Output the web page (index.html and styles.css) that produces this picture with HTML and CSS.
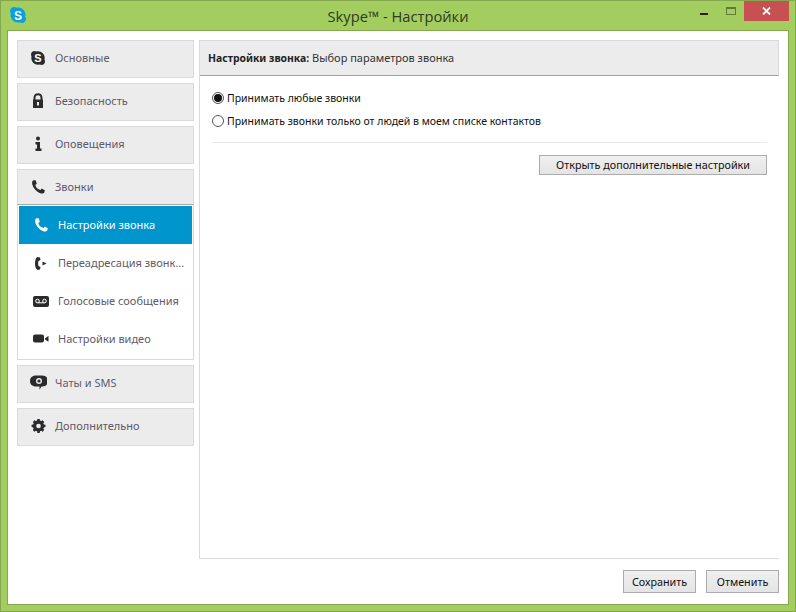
FILE: index.html
```html
<!DOCTYPE html>
<html lang="ru">
<head>
<meta charset="utf-8">
<title>Skype™ - Настройки</title>
<link rel="stylesheet" href="styles.css">
</head>
<body>
<div class="window">
  <header class="titlebar">
    <div class="tb-left">
      <svg class="app-icon" width="16" height="16" viewBox="0 0 16 16"><path fill="#0a9fe0" d="M4 0C2 0 0 2 0 4c0 1 .3 1.800.8 2.500C.6 7 .5 7.500.5 8c0 4 3.500 7.500 7.500 7.500.5 0 1-.1 1.500-.3.700.5 1.500.8 2.500.8 2 0 4-2 4-4 0-1-.3-1.800-.8-2.500.2-.5.300-1 .3-1.500C15.500 4 12 .5 8 .5c-.5 0-1 .1-1.500.3C5.800.3 5 0 4 0z"/><text x="8" y="12.500" class="app-s">S</text></svg>
    </div>
    <div class="tb-title">Skype™ - Настройки</div>
    <div class="tb-controls">
      <span class="ctl-min"></span>
      <span class="ctl-max"></span>
      <span class="ctl-close"><svg width="9" height="8" viewBox="0 0 9 8"><path d="M1 0.500 L8 7.500 M8 0.500 L1 7.500" stroke="#fff" stroke-width="1.800" fill="none"/></svg></span>
    </div>
  </header>
  <div class="client">
    <div class="columns">
      <nav class="sidebar">
        <a class="nav-item">
          <svg class="icon" width="18" height="18" viewBox="0 0 18 18"><path fill="#2b2b2e" d="M5.500 2C3.500 2 2 3.500 2 5.500c0 .7.2 1.300.5 1.800-.1.500-.2 1-.2 1.700 0 3.700 3 6.700 6.700 6.700.6 0 1.200-.1 1.700-.2.500.3 1.100.5 1.800.5 2 0 3.500-1.500 3.500-3.500 0-.7-.2-1.300-.5-1.800.1-.5.200-1.100.200-1.700 0-3.700-3-6.700-6.700-6.700-.6 0-1.200.1-1.700.2C6.800 2.200 6.200 2 5.500 2z"/><text x="9" y="12.800" class="glyph-s">S</text></svg>
          <span>Основные</span>
        </a>
        <a class="nav-item">
          <svg class="icon" width="18" height="18" viewBox="0 0 18 18"><path fill="#2b2b2e" fill-rule="evenodd" d="M4.500 7.500V6c0-3 1.700-4.800 4.500-4.800S13.500 3 13.500 6v1.500h.5V16H4V7.500zM6.500 7.500h5V6c0-1.700-.8-2.700-2.500-2.700S6.500 4.300 6.500 6zM8 10v3.500h2V10z"/></svg>
          <span>Безопасность</span>
        </a>
        <a class="nav-item">
          <svg class="icon" width="18" height="18" viewBox="0 0 18 18"><circle cx="9" cy="3.500" r="2" fill="#2b2b2e"/><path fill="#2b2b2e" d="M6.500 7H11v6.500h1.500V16H6.500v-2.500H8V9.500H6.500z"/></svg>
          <span>Оповещения</span>
        </a>
        <div class="nav-group">
          <a class="nav-item nav-open">
            <svg class="icon" width="18" height="18" viewBox="0 0 18 18"><path class="phone" d="M4 2.500 C5 2 6 2 6.800 2.500 L7.800 5.800 L6.300 7 C6.800 9.500 8.800 11.500 11.500 12 L12.800 10.500 L15.800 12.300 L15.300 14.500 C14.600 15.500 13 15.800 11.500 15.300 C8 14.200 4.500 10.500 3.300 6.500 C2.900 5 3 3.200 4 2.500z"/></svg>
            <span>Звонки</span>
          </a>
          <div class="subnav">
            <a class="sub-item selected">
              <svg class="icon" width="18" height="18" viewBox="0 0 18 18"><path fill="#fff" d="M4 2.500 C5 2 6 2 6.800 2.500 L7.800 5.800 L6.300 7 C6.800 9.500 8.800 11.500 11.500 12 L12.800 10.500 L15.800 12.300 L15.300 14.500 C14.600 15.500 13 15.800 11.500 15.300 C8 14.200 4.500 10.500 3.300 6.500 C2.900 5 3 3.200 4 2.500z"/></svg>
              <span>Настройки звонка</span>
            </a>
            <a class="sub-item">
              <svg class="icon" width="18" height="18" viewBox="0 0 18 18"><path fill="#2b2b2e" d="M5 3 L8 3.500 L8.500 6 L6.500 7 C6 8.500 6 10.500 6.500 12 L8.500 13 L8 15.500 L5.500 16 C3.500 14.500 3 12 3 9.500 C3 7 3.500 4.500 5 3z"/><path fill="#2b2b2e" d="M10.500 7.500 L14.500 9.500 L10.500 11.500z"/></svg>
              <span>Переадресация звонк...</span>
            </a>
            <a class="sub-item">
              <svg class="icon" width="18" height="18" viewBox="0 0 18 18"><rect x="1" y="4" width="16" height="11" rx="2" fill="#2b2b2e"/><circle cx="5.500" cy="9" r="1.800" fill="none" stroke="#fff"/><circle cx="12.500" cy="9" r="1.800" fill="none" stroke="#fff"/><path d="M5.500 10.800 H12.500" stroke="#fff"/></svg>
              <span>Голосовые сообщения</span>
            </a>
            <a class="sub-item">
              <svg class="icon" width="18" height="18" viewBox="0 0 18 18"><rect x="1" y="4.500" width="11" height="8" rx="2" fill="#2b2b2e"/><path fill="#2b2b2e" d="M13 8.500 L16.500 5.800 V11.800 L13 9.500z"/></svg>
              <span>Настройки видео</span>
            </a>
          </div>
        </div>
        <a class="nav-item">
          <svg class="icon" width="18" height="18" viewBox="0 0 18 18"><path fill="#2b2b2e" fill-rule="evenodd" d="M5.800 1.500h6.400c3.500 0 5.800 2.300 5.800 5.500s-2.300 5.500-5.800 5.500h-.7L9.500 15.500v-3H5.800C2.300 12.500 0 10.200 0 7s2.300-5.500 5.800-5.500zM9 4a3 3 0 1 0 0 6 3 3 0 0 0 0-6z" transform="translate(1 0)"/><circle cx="10" cy="7" r="1.600" fill="#2b2b2e"/></svg>
          <span>Чаты и SMS</span>
        </a>
        <a class="nav-item">
          <svg class="icon" width="18" height="18" viewBox="0 0 18 18"><path fill="#2b2b2e" fill-rule="evenodd" d="M7.500 0h3l.4 2 1.500.7 1.800-1.100 2.100 2.100-1.100 1.800.7 1.500 2 .4v3l-2 .4-.7 1.500 1.100 1.800-2.100 2.100-1.800-1.100-1.500.7-.4 2h-3l-.4-2-1.500-.7-1.800 1.100-2.100-2.100 1.100-1.800-.7-1.500-2-.4v-3l2-.4.7-1.500-1.100-1.800 2.100-2.100 1.800 1.100 1.500-.7zM9 6a3 3 0 1 0 0 6 3 3 0 0 0 0-6z" transform="translate(2.500 2) scale(0.78)"/></svg>
          <span>Дополнительно</span>
        </a>
      </nav>
      <main class="panel">
        <div class="panel-head"><b>Настройки звонка:</b> Выбор параметров звонка</div>
        <div class="panel-body">
          <label class="radio"><span class="radio-dot on"></span>Принимать любые звонки</label>
          <label class="radio"><span class="radio-dot"></span>Принимать звонки только от людей в моем списке контактов</label>
          <hr class="divider">
          <div class="actions"><button class="btn btn-wide">Открыть дополнительные настройки</button></div>
        </div>
      </main>
    </div>
    <footer class="footer">
      <button class="btn btn-foot">Сохранить</button>
      <button class="btn btn-foot">Отменить</button>
    </footer>
  </div>
</div>
</body>
</html>
```
FILE: styles.css
```css
* { box-sizing: border-box; }
html, body { margin: 0; height: 100%; }
body { font-family: "Noto Sans", "Open Sans", sans-serif; overflow: hidden; }

.window {
  width: 796px; height: 612px;
  background: #a3ce5f;
  border: 1px solid #83a84f;
  display: flex; flex-direction: column;
  padding: 0 6px 6px 6px;
}

.titlebar {
  height: 29px; flex: none;
  display: grid; grid-template-columns: 1fr auto 1fr;
  align-items: start;
}
.tb-left { padding: 6px 0 0 3px; }
.app-icon { display: block; }
.app-s { font: bold 12px "Liberation Sans", sans-serif; fill: #fff; text-anchor: middle; }
.tb-title {
  font: 14.700px/30px "Open Sans", sans-serif;
  color: #2f3a22;
}
.tb-controls { display: flex; justify-content: flex-end; align-items: flex-start; }
.ctl-min { width: 8px; height: 2px; background: #222; margin: 12px 18px 0 0; }
.ctl-max { width: 10px; height: 8px; border: 1px solid #5f7a3a; border-top-width: 2px; margin: 6px 8px 0 0; }
.ctl-close {
  width: 45px; height: 20px; background: #c75050;
  display: flex; align-items: center; justify-content: center;
}
.ctl-close svg { display: block; }

.client {
  flex: 1; min-height: 0;
  background: #fff;
  border: 1px solid #83a84f;
  padding: 9px 9px 0 9px;
  display: flex; flex-direction: column;
}
.columns { flex: 1; min-height: 0; display: flex; gap: 5px; }

.sidebar { width: 177px; flex: none; display: flex; flex-direction: column; gap: 5px; }
.nav-item {
  height: 38px;
  background: #ececec;
  border: 1px solid #dadada;
  display: flex; align-items: center; gap: 8px;
  padding-left: 11px;
  font-size: 11px; color: #5f5a68;
}
.nav-item span { padding-bottom: 3px; }
.sub-item span, .nav-open span { padding-bottom: 1px; }
.nav-item .icon { margin-bottom: 2px; }
.nav-open .icon { margin-bottom: 0; }
.icon { display: block; flex: none; }
.glyph-s { font: bold 11px "Liberation Sans", sans-serif; fill: #fff; text-anchor: middle; }
.phone { fill: #2b2b2e; }
.nav-open { height: 36px; border-bottom-color: #a9a9a9; }
.subnav {
  border: 1px solid #dadada; border-top: 0;
  padding: 1px;
  display: flex; flex-direction: column;
}
.sub-item {
  height: 38px;
  display: flex; align-items: center; gap: 8px;
  padding-left: 13px;
  font-size: 11px; color: #5f5a68;
}
.sub-item.selected { background: #0095cc; color: #fff; }

.panel {
  flex: 1; min-width: 0;
  border-left: 1px solid #dadada;
  border-bottom: 1px solid #dadada;
  display: flex; flex-direction: column;
}
.panel-head {
  height: 36px; flex: none;
  background: #ececec;
  border-top: 1px solid #dadada;
  border-right: 1px solid #dadada;
  border-bottom: 1px solid #a0a0a0;
  padding-left: 8px;
  font-size: 11px; line-height: 34px; color: #333;
}
.panel-head b { font-weight: 700; color: #222; font-size: 10.400px; }
.panel-body { padding: 10px 12px 0 12px; }
.radio {
  display: flex; align-items: center; gap: 3px;
  height: 23px;
  font-size: 10.500px; color: #111;
}
.radio-dot {
  width: 12px; height: 12px; border-radius: 50%;
  border: 1px solid #555; background: #fff;
  display: flex; align-items: center; justify-content: center; flex: none;
}
.radio-dot.on::after { content: ""; width: 8px; height: 8px; border-radius: 50%; background: #111; }
.divider { border: 0; border-top: 1px solid #e6e9ea; margin: 10px 0 12px; }
.actions { display: flex; justify-content: flex-end; }

.btn {
  height: 20px; padding: 0;
  background: linear-gradient(#f0f0f0, #e4e4e4);
  border: 1px solid #acacac;
  font-family: inherit; font-size: 10.750px; color: #111;
}
.btn-wide { width: 228px; }
.footer { flex: none; height: 45px; display: flex; justify-content: flex-end; align-items: flex-start; gap: 10px; padding-top: 11px; }
.btn-foot { width: 73px; height: 23px; }
```
